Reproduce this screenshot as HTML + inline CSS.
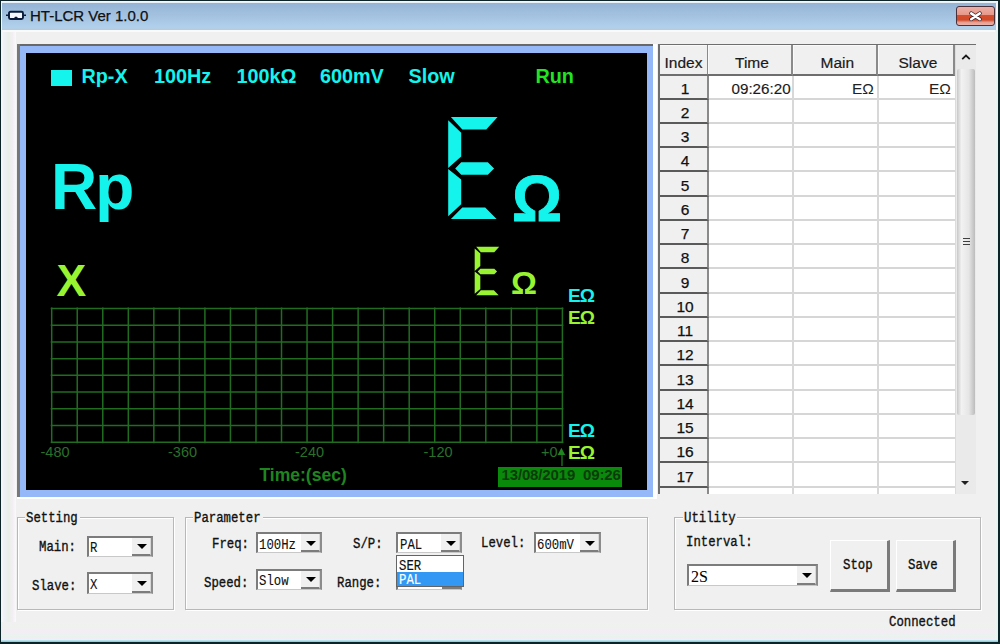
<!DOCTYPE html>
<html><head><meta charset="utf-8">
<style>
*{margin:0;padding:0;box-sizing:border-box}
html,body{width:1000px;height:644px;overflow:hidden;background:#0c2428;position:relative}
.a{position:absolute}
.s{font-family:"Liberation Sans",sans-serif;white-space:pre;line-height:1}
.b{font-weight:bold}
.m{font-family:"Liberation Mono",monospace;font-size:14px;color:#111;-webkit-text-stroke:0.35px #111;white-space:pre;line-height:14px;transform:scaleX(0.88);transform-origin:0 0}
.grp{border:1px solid #b8b8b8;box-shadow:inset 1px 1px 0 #fff,1px 1px 0 #fff}
.cb{background:#fff;border-top:2px solid #7c7c7c;border-left:2px solid #7c7c7c;border-right:2px solid #8c8c8c;border-bottom:1px solid #c8c8c8}
.cbb{background:#f0f0f0;border-right:1px solid #d8d8d8;border-bottom:2px solid #7c7c7c}
.tri{width:0;height:0;border-left:5px solid transparent;border-right:5px solid transparent;border-top:5px solid #000}
.btn{background:#f0f0f0;border-top:1px solid #fff;border-left:1px solid #fff;border-right:3px solid #7a7a7a;border-bottom:3px solid #7a7a7a}
.hd{background:#f0f0f0;border-right:2px solid #8a8a8a;border-bottom:2px solid #6e6e6e;box-shadow:inset 1px 1px 0 #fafafa}
</style></head><body>

<div class="a" style="left:1px;top:1px;width:997px;height:641px;background:#f4f6f8"></div>
<div class="a" style="left:1px;top:622px;width:997px;height:18px;background:linear-gradient(#f0f0f0,#eef2ee 30%,#f4ecf4 55%,#e8f4ec 75%,#f4ecf8)"></div>
<div class="a" style="left:1px;top:639.5px;width:997px;height:2.5px;background:linear-gradient(#c8ecf4,#7cc8dc)"></div>
<div class="a" style="left:2px;top:2px;width:995px;height:1px;background:#e8f0f8"></div>
<div class="a" style="left:2px;top:3px;width:994px;height:27px;background:linear-gradient(#94b4d6,#a2c0de 40%,#b0d0ec 90%,#b8cadc)"></div>
<div class="a" style="left:3px;top:30px;width:992px;height:592px;background:#f0f0f0"></div>
<div class="a" style="left:3px;top:30px;width:13px;height:592px;background:linear-gradient(90deg,#f0f2fa,#e8f0e8 45%,#f4eef4 75%,#fafafa)"></div>
<div class="a" style="left:3px;top:30px;width:992px;height:2px;background:#f8fafc"></div>
<div class="a" style="left:995px;top:30px;width:3px;height:609px;background:linear-gradient(90deg,#f4f0f4,#e8f4f0,#f8e8f4)"></div>
<svg class="a" style="left:5px;top:10px" width="22" height="11" viewBox="0 0 22 11"><path d="M1 5.3H3.5M18.5 5.3H21" stroke="#0a1a3a" stroke-width="1.5"/><rect x="4" y="1.7" width="14" height="7.3" rx="1.5" fill="#f4f8fc" stroke="#0a1a3a" stroke-width="1.9"/><path d="M8.5 9L10 6.8H12L13.5 9Z" fill="#0a1a3a"/></svg>
<div class="a s" style="left:30.00px;top:7.80px;font-size:15px;color:#101010;-webkit-text-stroke:0.25px #101010">HT-LCR Ver 1.0.0</div>
<div class="a" style="left:956px;top:6px;width:39px;height:20px;border:1px solid #4c3038;border-radius:3px;background:linear-gradient(#eab0a8,#e89888 42%,#d44e2e 47%,#d04a2a 72%,#e89c90 85%,#eeb0a8)"></div>
<svg class="a" style="left:968px;top:10px" width="15" height="12" viewBox="0 0 15 12"><path d="M3.2 3.4L11.8 9.2M11.8 3.4L3.2 9.2" stroke="#3a2028" stroke-width="4" stroke-linecap="round"/><path d="M3.2 3.4L11.8 9.2M11.8 3.4L3.2 9.2" stroke="#fff" stroke-width="2.5" stroke-linecap="round"/></svg>
<div class="a" style="left:17px;top:44px;width:640px;height:455px;background:#fff"></div>
<div class="a" style="left:17px;top:44px;width:636px;height:2px;background:#686868"></div>
<div class="a" style="left:17px;top:44px;width:3px;height:453px;background:#787878"></div>
<div class="a" style="left:20px;top:46px;width:633px;height:451px;background:#94b8f8"></div>
<div class="a" style="left:26px;top:53px;width:621px;height:437px;background:#000"></div>
<div class="a" style="left:51px;top:70px;width:21px;height:16px;background:#14f4ec"></div>
<div class="a s b" style="left:81.50px;top:67.23px;font-size:19.8px;color:#14f4ec;">Rp-X</div>
<div class="a s b" style="left:154.00px;top:67.23px;font-size:19.8px;color:#14f4ec;">100Hz</div>
<div class="a s b" style="left:236.50px;top:67.23px;font-size:19.8px;color:#14f4ec;">100k&Omega;</div>
<div class="a s b" style="left:320.00px;top:67.23px;font-size:19.8px;color:#14f4ec;">600mV</div>
<div class="a s b" style="left:408.50px;top:67.23px;font-size:19.8px;color:#14f4ec;">Slow</div>
<div class="a s b" style="left:535.50px;top:67.23px;font-size:19.8px;color:#22e422;">Run</div>
<div class="a s b" style="left:51.00px;top:154.66px;font-size:64px;color:#14f4ec;letter-spacing:-2px">Rp</div>
<div class="a s b" style="left:56.50px;top:258.58px;font-size:44.5px;color:#98f430;">X</div>
<svg class="a" style="left:0;top:0" width="1000" height="644">
<path d="M450.90 117.10 L497.60 117.10 L486.22 129.60 L462.32 129.60Z M448.20 120.30 L461.20 132.72 L461.20 156.60 L448.20 168.10Z M448.20 169.10 L461.20 179.60 L461.20 204.35 L448.20 216.30Z M455.20 168.60 L461.20 162.35 L487.82 162.35 L494.07 168.60 L487.82 174.85 L461.20 174.85Z M462.32 207.60 L485.22 207.60 L496.60 219.10 L450.90 219.10Z" fill="#14f4ec"/>
<path d="M476.19 246.80 L499.20 246.80 L494.29 252.20 L480.80 252.20Z M474.70 248.56 L480.32 253.55 L480.32 266.08 L474.70 271.05Z M474.70 271.60 L480.32 276.02 L480.32 288.93 L474.70 293.76Z M477.72 271.55 L480.32 268.85 L494.35 268.85 L497.05 271.55 L494.35 274.25 L480.32 274.25Z M480.80 290.33 L493.85 290.33 L498.65 295.30 L476.19 295.30Z" fill="#98f430"/>
</svg>
<div class="a s b" style="left:511.50px;top:166.86px;font-size:64.29px;color:#14f4ec;-webkit-text-stroke:0.92px #14f4ec;transform:scaleX(0.972);transform-origin:0 0">&Omega;</div>
<div class="a s b" style="left:511.11px;top:268.22px;font-size:31.86px;color:#98f430;-webkit-text-stroke:0.00px #98f430;transform:scaleX(1.016);transform-origin:0 0">&Omega;</div>
<div class="a s b" style="left:568.00px;top:286.16px;font-size:19px;color:#14f4ec;letter-spacing:-0.8px">E&Omega;</div>
<div class="a s b" style="left:568.00px;top:308.36px;font-size:19px;color:#98f430;letter-spacing:-0.8px">E&Omega;</div>
<div class="a s b" style="left:568.00px;top:420.66px;font-size:19px;color:#14f4ec;letter-spacing:-0.8px">E&Omega;</div>
<div class="a s b" style="left:568.00px;top:443.06px;font-size:19px;color:#98f430;letter-spacing:-0.8px">E&Omega;</div>
<svg class="a" style="left:0;top:0" width="1000" height="644"><line x1="51.70" y1="307.5" x2="51.70" y2="443.2" stroke="#216c21" stroke-width="1.5"/><line x1="77.23" y1="307.5" x2="77.23" y2="443.2" stroke="#216c21" stroke-width="1.5"/><line x1="102.77" y1="307.5" x2="102.77" y2="443.2" stroke="#216c21" stroke-width="1.5"/><line x1="128.31" y1="307.5" x2="128.31" y2="443.2" stroke="#216c21" stroke-width="1.5"/><line x1="153.84" y1="307.5" x2="153.84" y2="443.2" stroke="#216c21" stroke-width="1.5"/><line x1="179.38" y1="307.5" x2="179.38" y2="443.2" stroke="#216c21" stroke-width="1.5"/><line x1="204.91" y1="307.5" x2="204.91" y2="443.2" stroke="#216c21" stroke-width="1.5"/><line x1="230.44" y1="307.5" x2="230.44" y2="443.2" stroke="#216c21" stroke-width="1.5"/><line x1="255.98" y1="307.5" x2="255.98" y2="443.2" stroke="#216c21" stroke-width="1.5"/><line x1="281.51" y1="307.5" x2="281.51" y2="443.2" stroke="#216c21" stroke-width="1.5"/><line x1="307.05" y1="307.5" x2="307.05" y2="443.2" stroke="#216c21" stroke-width="1.5"/><line x1="332.58" y1="307.5" x2="332.58" y2="443.2" stroke="#216c21" stroke-width="1.5"/><line x1="358.12" y1="307.5" x2="358.12" y2="443.2" stroke="#216c21" stroke-width="1.5"/><line x1="383.65" y1="307.5" x2="383.65" y2="443.2" stroke="#216c21" stroke-width="1.5"/><line x1="409.19" y1="307.5" x2="409.19" y2="443.2" stroke="#216c21" stroke-width="1.5"/><line x1="434.72" y1="307.5" x2="434.72" y2="443.2" stroke="#216c21" stroke-width="1.5"/><line x1="460.26" y1="307.5" x2="460.26" y2="443.2" stroke="#216c21" stroke-width="1.5"/><line x1="485.79" y1="307.5" x2="485.79" y2="443.2" stroke="#216c21" stroke-width="1.5"/><line x1="511.33" y1="307.5" x2="511.33" y2="443.2" stroke="#216c21" stroke-width="1.5"/><line x1="536.87" y1="307.5" x2="536.87" y2="443.2" stroke="#216c21" stroke-width="1.5"/><line x1="562.40" y1="307.5" x2="562.40" y2="443.2" stroke="#216c21" stroke-width="1.5"/><line x1="50.70" y1="308.50" x2="563.40" y2="308.50" stroke="#216c21" stroke-width="1.5"/><line x1="50.70" y1="325.21" x2="563.40" y2="325.21" stroke="#216c21" stroke-width="1.5"/><line x1="50.70" y1="341.93" x2="563.40" y2="341.93" stroke="#216c21" stroke-width="1.5"/><line x1="50.70" y1="358.64" x2="563.40" y2="358.64" stroke="#216c21" stroke-width="1.5"/><line x1="50.70" y1="375.35" x2="563.40" y2="375.35" stroke="#216c21" stroke-width="1.5"/><line x1="50.70" y1="392.06" x2="563.40" y2="392.06" stroke="#216c21" stroke-width="1.5"/><line x1="50.70" y1="408.77" x2="563.40" y2="408.77" stroke="#216c21" stroke-width="1.5"/><line x1="50.70" y1="425.49" x2="563.40" y2="425.49" stroke="#216c21" stroke-width="1.5"/><line x1="50.70" y1="442.20" x2="563.40" y2="442.20" stroke="#216c21" stroke-width="1.5"/><path d="M557.6 455 L561.4 447.8 L565.2 455 Z" fill="#1f861f"/><line x1="562" y1="455" x2="562" y2="466" stroke="#1f861f" stroke-width="1.2"/></svg>
<div class="a s" style="left:40.50px;top:445.08px;font-size:14.5px;color:#2a702a;">-480</div>
<div class="a s" style="left:168.00px;top:445.08px;font-size:14.5px;color:#2a702a;">-360</div>
<div class="a s" style="left:295.00px;top:445.08px;font-size:14.5px;color:#2a702a;">-240</div>
<div class="a s" style="left:423.50px;top:445.08px;font-size:14.5px;color:#2a702a;">-120</div>
<div class="a s" style="left:541.00px;top:445.08px;font-size:14.5px;color:#2a702a;">+0</div>
<div class="a s b" style="left:259.50px;top:466.60px;font-size:17.5px;color:#1f861f;">Time:(sec)</div>
<div class="a" style="left:498px;top:466.5px;width:124px;height:20px;background:#0a8a0a"></div>
<div class="a s b" style="left:501.50px;top:466.80px;font-size:15px;color:#0c3c0c;letter-spacing:-0.15px">13/08/2019  09:26</div>
<div class="a" style="left:658px;top:44px;width:318px;height:450px;background:#fff;overflow:hidden">
<div class="a hd" style="left:0.00px;top:1.00px;width:51.00px;height:31px"></div>
<div class="a hd" style="left:50.00px;top:1.00px;width:84.60px;height:31px"></div>
<div class="a hd" style="left:134.60px;top:1.00px;width:85.40px;height:31px"></div>
<div class="a hd" style="left:220.00px;top:1.00px;width:76.60px;height:31px"></div>
<div class="a s" style="left:6.50px;top:10.82px;font-size:15.5px;color:#1a1a1a;-webkit-text-stroke:0.2px #1a1a1a">Index</div>
<div class="a s" style="left:77.00px;top:10.82px;font-size:15.5px;color:#1a1a1a;-webkit-text-stroke:0.2px #1a1a1a">Time</div>
<div class="a s" style="left:162.50px;top:10.82px;font-size:15.5px;color:#1a1a1a;-webkit-text-stroke:0.2px #1a1a1a">Main</div>
<div class="a s" style="left:240.50px;top:10.82px;font-size:15.5px;color:#1a1a1a;-webkit-text-stroke:0.2px #1a1a1a">Slave</div>
<div class="a hd" style="left:0.00px;top:31.50px;width:51px;height:24.24px;border-bottom-color:#5a5a5a;box-shadow:none"></div>
<div class="a" style="left:51.00px;top:53.74px;width:246px;height:2px;background:#d6d6d6"></div>
<div class="a s" style="left:1.50px;top:36.72px;width:51px;text-align:center;font-size:15.5px;color:#111;-webkit-text-stroke:0.25px #111">1</div>
<div class="a hd" style="left:0.00px;top:55.74px;width:51px;height:24.24px;border-bottom-color:#5a5a5a;box-shadow:none"></div>
<div class="a" style="left:51.00px;top:77.98px;width:246px;height:2px;background:#d6d6d6"></div>
<div class="a s" style="left:1.50px;top:60.96px;width:51px;text-align:center;font-size:15.5px;color:#111;-webkit-text-stroke:0.25px #111">2</div>
<div class="a hd" style="left:0.00px;top:79.98px;width:51px;height:24.24px;border-bottom-color:#5a5a5a;box-shadow:none"></div>
<div class="a" style="left:51.00px;top:102.22px;width:246px;height:2px;background:#d6d6d6"></div>
<div class="a s" style="left:1.50px;top:85.20px;width:51px;text-align:center;font-size:15.5px;color:#111;-webkit-text-stroke:0.25px #111">3</div>
<div class="a hd" style="left:0.00px;top:104.22px;width:51px;height:24.24px;border-bottom-color:#5a5a5a;box-shadow:none"></div>
<div class="a" style="left:51.00px;top:126.46px;width:246px;height:2px;background:#d6d6d6"></div>
<div class="a s" style="left:1.50px;top:109.44px;width:51px;text-align:center;font-size:15.5px;color:#111;-webkit-text-stroke:0.25px #111">4</div>
<div class="a hd" style="left:0.00px;top:128.46px;width:51px;height:24.24px;border-bottom-color:#5a5a5a;box-shadow:none"></div>
<div class="a" style="left:51.00px;top:150.70px;width:246px;height:2px;background:#d6d6d6"></div>
<div class="a s" style="left:1.50px;top:133.68px;width:51px;text-align:center;font-size:15.5px;color:#111;-webkit-text-stroke:0.25px #111">5</div>
<div class="a hd" style="left:0.00px;top:152.70px;width:51px;height:24.24px;border-bottom-color:#5a5a5a;box-shadow:none"></div>
<div class="a" style="left:51.00px;top:174.94px;width:246px;height:2px;background:#d6d6d6"></div>
<div class="a s" style="left:1.50px;top:157.92px;width:51px;text-align:center;font-size:15.5px;color:#111;-webkit-text-stroke:0.25px #111">6</div>
<div class="a hd" style="left:0.00px;top:176.94px;width:51px;height:24.24px;border-bottom-color:#5a5a5a;box-shadow:none"></div>
<div class="a" style="left:51.00px;top:199.18px;width:246px;height:2px;background:#d6d6d6"></div>
<div class="a s" style="left:1.50px;top:182.16px;width:51px;text-align:center;font-size:15.5px;color:#111;-webkit-text-stroke:0.25px #111">7</div>
<div class="a hd" style="left:0.00px;top:201.18px;width:51px;height:24.24px;border-bottom-color:#5a5a5a;box-shadow:none"></div>
<div class="a" style="left:51.00px;top:223.42px;width:246px;height:2px;background:#d6d6d6"></div>
<div class="a s" style="left:1.50px;top:206.40px;width:51px;text-align:center;font-size:15.5px;color:#111;-webkit-text-stroke:0.25px #111">8</div>
<div class="a hd" style="left:0.00px;top:225.42px;width:51px;height:24.24px;border-bottom-color:#5a5a5a;box-shadow:none"></div>
<div class="a" style="left:51.00px;top:247.66px;width:246px;height:2px;background:#d6d6d6"></div>
<div class="a s" style="left:1.50px;top:230.64px;width:51px;text-align:center;font-size:15.5px;color:#111;-webkit-text-stroke:0.25px #111">9</div>
<div class="a hd" style="left:0.00px;top:249.66px;width:51px;height:24.24px;border-bottom-color:#5a5a5a;box-shadow:none"></div>
<div class="a" style="left:51.00px;top:271.90px;width:246px;height:2px;background:#d6d6d6"></div>
<div class="a s" style="left:1.50px;top:254.88px;width:51px;text-align:center;font-size:15.5px;color:#111;-webkit-text-stroke:0.25px #111">10</div>
<div class="a hd" style="left:0.00px;top:273.90px;width:51px;height:24.24px;border-bottom-color:#5a5a5a;box-shadow:none"></div>
<div class="a" style="left:51.00px;top:296.14px;width:246px;height:2px;background:#d6d6d6"></div>
<div class="a s" style="left:1.50px;top:279.12px;width:51px;text-align:center;font-size:15.5px;color:#111;-webkit-text-stroke:0.25px #111">11</div>
<div class="a hd" style="left:0.00px;top:298.14px;width:51px;height:24.24px;border-bottom-color:#5a5a5a;box-shadow:none"></div>
<div class="a" style="left:51.00px;top:320.38px;width:246px;height:2px;background:#d6d6d6"></div>
<div class="a s" style="left:1.50px;top:303.36px;width:51px;text-align:center;font-size:15.5px;color:#111;-webkit-text-stroke:0.25px #111">12</div>
<div class="a hd" style="left:0.00px;top:322.38px;width:51px;height:24.24px;border-bottom-color:#5a5a5a;box-shadow:none"></div>
<div class="a" style="left:51.00px;top:344.62px;width:246px;height:2px;background:#d6d6d6"></div>
<div class="a s" style="left:1.50px;top:327.60px;width:51px;text-align:center;font-size:15.5px;color:#111;-webkit-text-stroke:0.25px #111">13</div>
<div class="a hd" style="left:0.00px;top:346.62px;width:51px;height:24.24px;border-bottom-color:#5a5a5a;box-shadow:none"></div>
<div class="a" style="left:51.00px;top:368.86px;width:246px;height:2px;background:#d6d6d6"></div>
<div class="a s" style="left:1.50px;top:351.84px;width:51px;text-align:center;font-size:15.5px;color:#111;-webkit-text-stroke:0.25px #111">14</div>
<div class="a hd" style="left:0.00px;top:370.86px;width:51px;height:24.24px;border-bottom-color:#5a5a5a;box-shadow:none"></div>
<div class="a" style="left:51.00px;top:393.10px;width:246px;height:2px;background:#d6d6d6"></div>
<div class="a s" style="left:1.50px;top:376.08px;width:51px;text-align:center;font-size:15.5px;color:#111;-webkit-text-stroke:0.25px #111">15</div>
<div class="a hd" style="left:0.00px;top:395.10px;width:51px;height:24.24px;border-bottom-color:#5a5a5a;box-shadow:none"></div>
<div class="a" style="left:51.00px;top:417.34px;width:246px;height:2px;background:#d6d6d6"></div>
<div class="a s" style="left:1.50px;top:400.32px;width:51px;text-align:center;font-size:15.5px;color:#111;-webkit-text-stroke:0.25px #111">16</div>
<div class="a hd" style="left:0.00px;top:419.34px;width:51px;height:24.24px;border-bottom-color:#5a5a5a;box-shadow:none"></div>
<div class="a" style="left:51.00px;top:441.58px;width:246px;height:2px;background:#d6d6d6"></div>
<div class="a s" style="left:1.50px;top:424.56px;width:51px;text-align:center;font-size:15.5px;color:#111;-webkit-text-stroke:0.25px #111">17</div>
<div class="a hd" style="left:0.00px;top:443.58px;width:51px;height:24.24px;border-bottom-color:#5a5a5a;box-shadow:none"></div>
<div class="a" style="left:51.00px;top:465.82px;width:246px;height:2px;background:#d6d6d6"></div>
<div class="a" style="left:133.60px;top:32.00px;width:2px;height:418px;background:#d8d8d8"></div>
<div class="a" style="left:219.00px;top:32.00px;width:2px;height:418px;background:#d8d8d8"></div>
<div class="a s" style="left:73.50px;top:37.00px;font-size:15.2px;color:#1a1a1a;-webkit-text-stroke:0.15px #1a1a1a">09:26:20</div>
<div class="a s" style="left:194.00px;top:37.00px;font-size:15.5px;color:#222">E&Omega;</div>
<div class="a s" style="left:271.00px;top:37.00px;font-size:15.5px;color:#222">E&Omega;</div>
</div>
<div class="a" style="left:658px;top:44px;width:2px;height:450px;background:#6e6e6e"></div>
<div class="a" style="left:658px;top:44px;width:318px;height:1px;background:#6e6e6e"></div>
<div class="a" style="left:954.6px;top:45px;width:21.4px;height:449px;background:#eaeaea;border-left:1px solid #dcdcdc"></div>
<div class="a" style="left:957px;top:68.7px;width:18px;height:346.3px;border-radius:2px;background:linear-gradient(90deg,#c8c8c8,#f2f2f2 25%,#e6e6e6 65%,#bcbcbc)"></div>
<svg class="a" style="left:959px;top:52px" width="14" height="10"><path d="M3.2 7.2L7 3.6L10.8 7.2" fill="none" stroke="#1a1a1a" stroke-width="1.8"/></svg>
<svg class="a" style="left:958px;top:478px" width="14" height="10"><path d="M3 3H11L7 7Z" fill="#202020"/></svg>
<svg class="a" style="left:961.5px;top:236.5px" width="10" height="10"><path d="M1 1.5H8M1 4.5H8M1 7.5H8" stroke="#404040" stroke-width="1.2"/></svg>
<div class="a grp" style="left:17px;top:517px;width:157px;height:92.5px"></div>
<div class="a" style="left:25.20px;top:515.00px;width:54.80px;height:6px;background:#f0f0f0"></div>
<div class="a m" style="left:26.20px;top:511.40px;">Setting</div>
<div class="a grp" style="left:185px;top:517px;width:463px;height:92.5px"></div>
<div class="a" style="left:193.00px;top:515.00px;width:69.60px;height:6px;background:#f0f0f0"></div>
<div class="a m" style="left:194.00px;top:511.40px;">Parameter</div>
<div class="a grp" style="left:674px;top:517px;width:307px;height:92.5px"></div>
<div class="a" style="left:682.60px;top:515.00px;width:54.80px;height:6px;background:#f0f0f0"></div>
<div class="a m" style="left:683.60px;top:511.40px;">Utility</div>
<div class="a m" style="left:39.20px;top:540.20px;">Main:</div>
<div class="a m" style="left:32.00px;top:578.60px;">Slave:</div>
<div class="a cb" style="left:86.5px;top:535.5px;width:66.3px;height:21.5px"></div>
<div class="a cbb" style="left:131.8px;top:537.5px;width:19px;height:18.5px"></div>
<div class="a tri" style="left:136.8px;top:544.0px"></div>
<div class="a m" style="left:89.70px;top:541.10px;-webkit-text-stroke:0.1px #111">R</div>
<div class="a cb" style="left:86.5px;top:572px;width:66.3px;height:21.5px"></div>
<div class="a cbb" style="left:131.8px;top:574px;width:19px;height:18.5px"></div>
<div class="a tri" style="left:136.8px;top:580.5px"></div>
<div class="a m" style="left:89.70px;top:577.60px;-webkit-text-stroke:0.1px #111">X</div>
<div class="a m" style="left:211.50px;top:537.30px;">Freq:</div>
<div class="a m" style="left:204.00px;top:575.50px;">Speed:</div>
<div class="a cb" style="left:255.5px;top:532.2px;width:66.2px;height:21px"></div>
<div class="a cbb" style="left:300.7px;top:534.2px;width:19px;height:18px"></div>
<div class="a tri" style="left:305.7px;top:540.7px"></div>
<div class="a m" style="left:258.70px;top:537.80px;-webkit-text-stroke:0.1px #111">100Hz</div>
<div class="a cb" style="left:255.5px;top:568.5px;width:66.2px;height:21px"></div>
<div class="a cbb" style="left:300.7px;top:570.5px;width:19px;height:18px"></div>
<div class="a tri" style="left:305.7px;top:577.0px"></div>
<div class="a m" style="left:258.70px;top:574.10px;-webkit-text-stroke:0.1px #111">Slow</div>
<div class="a m" style="left:352.50px;top:537.30px;">S/P:</div>
<div class="a m" style="left:336.70px;top:575.50px;">Range:</div>
<div class="a m" style="left:481.00px;top:535.80px;">Level:</div>
<div class="a cb" style="left:534px;top:532px;width:67px;height:21px"></div>
<div class="a cbb" style="left:580px;top:534px;width:19px;height:18px"></div>
<div class="a tri" style="left:585px;top:540.5px"></div>
<div class="a m" style="left:537.20px;top:537.60px;-webkit-text-stroke:0.1px #111">600mV</div>
<div class="a cb" style="left:396px;top:569px;width:66px;height:21px"></div>
<div class="a" style="left:442px;top:586px;width:19px;height:3px;background:#7c7c7c"></div>
<div class="a cb" style="left:396.4px;top:532.2px;width:65.2px;height:21px"></div>
<div class="a cbb" style="left:440.59999999999997px;top:534.2px;width:19px;height:18px"></div>
<div class="a tri" style="left:445.59999999999997px;top:540.7px"></div>
<div class="a m" style="left:399.60px;top:537.80px;-webkit-text-stroke:0.1px #111">PAL</div>
<div class="a" style="left:396.4px;top:555px;width:68px;height:32px;background:#fff;border:1px solid #646464"></div>
<div class="a" style="left:397.4px;top:571.6px;width:66px;height:14.5px;background:#3398f4"></div>
<div class="a m" style="left:398.50px;top:558.80px;-webkit-text-stroke:0.15px #111">SER</div>
<div class="a m" style="left:398.50px;top:572.70px;color:#fff;-webkit-text-stroke:0.15px #fff">PAL</div>
<div class="a m" style="left:686.30px;top:535.10px;">Interval:</div>
<div class="a cb" style="left:687px;top:564.2px;width:131px;height:21.8px"></div>
<div class="a cbb" style="left:797px;top:566.2px;width:19px;height:18.8px"></div>
<div class="a tri" style="left:802px;top:572.7px"></div>
<div class="a" style="white-space:pre;left:691px;top:568.2px;font-family:"Liberation Sans",sans-serif;font-size:13.8px;color:#222;line-height:16px">2S</div>
<div class="a btn" style="left:830px;top:539.5px;width:60.2px;height:52px"></div>
<div class="a btn" style="left:895.6px;top:539.5px;width:60.3px;height:52px"></div>
<div class="a m" style="left:843.30px;top:558.00px;">Stop</div>
<div class="a m" style="left:908.00px;top:558.00px;">Save</div>
<div class="a m" style="left:889.20px;top:614.70px;">Connected</div>
</body></html>
